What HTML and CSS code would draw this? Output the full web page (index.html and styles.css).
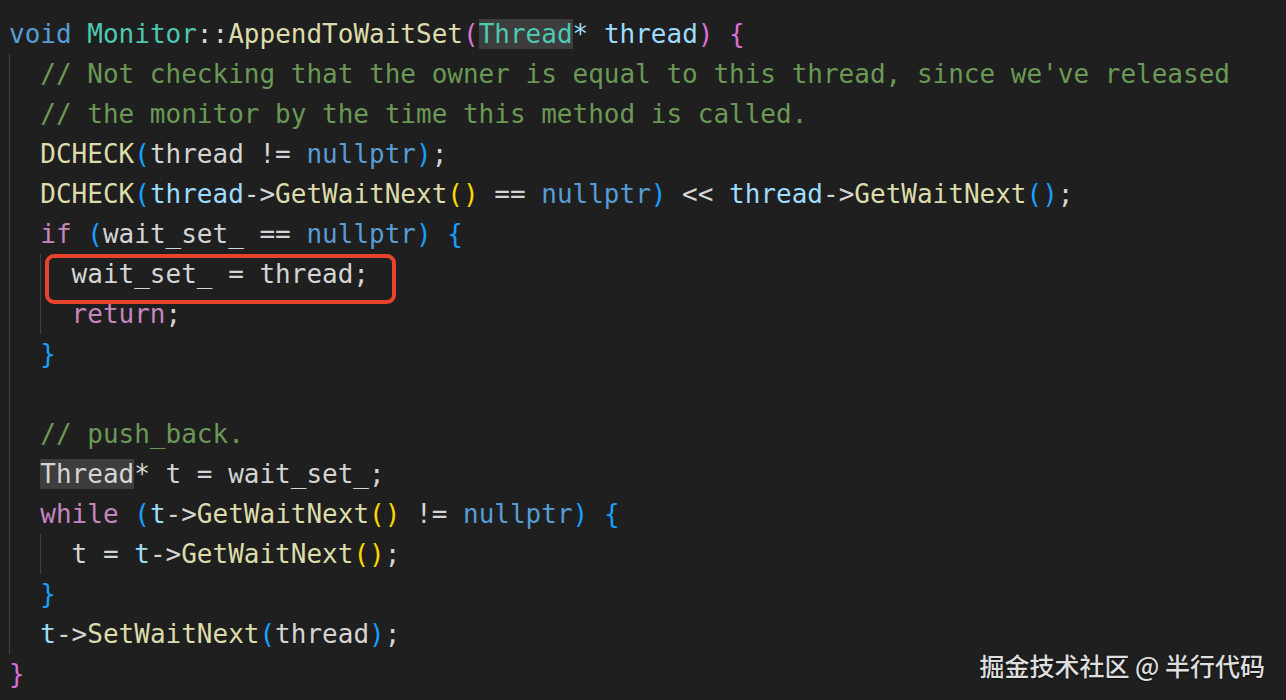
FILE: index.html
```html
<!DOCTYPE html>
<html lang="zh">
<head>
<meta charset="utf-8">
<title>Monitor::AppendToWaitSet</title>
<link rel="stylesheet" href="styles.css">
</head>
<body>
<div class="editor">
  <div class="code">
    <div class="ln"><span class="kw">void</span> <span class="ty">Monitor</span>::<span class="fn">AppendToWaitSet</span><span class="b2">(</span><span class="hl ty">Thread</span><span class="ptr">*</span> <span class="var">thread</span><span class="b2">)</span> <span class="b2">{</span></div>
    <div class="ln"><span class="ind"></span><span class="cm">// Not checking that the owner is equal to this thread, since we've released</span></div>
    <div class="ln"><span class="ind"></span><span class="cm">// the monitor by the time this method is called.</span></div>
    <div class="ln"><span class="ind"></span><span class="fn">DCHECK</span><span class="b3">(</span>thread != <span class="kw">nullptr</span><span class="b3">)</span>;</div>
    <div class="ln"><span class="ind"></span><span class="fn">DCHECK</span><span class="b3">(</span><span class="var">thread</span>-&gt;<span class="fn">GetWaitNext</span><span class="b1">()</span> == <span class="kw">nullptr</span><span class="b3">)</span> &lt;&lt; <span class="var">thread</span>-&gt;<span class="fn">GetWaitNext</span><span class="b3">()</span>;</div>
    <div class="ln"><span class="ind"></span><span class="ctl">if</span> <span class="b3">(</span>wait_set_ == <span class="kw">nullptr</span><span class="b3">)</span> <span class="b3">{</span></div>
    <div class="ln"><span class="ind"></span><span class="ind"></span>wait_set_ = thread;<span class="mark"></span></div>
    <div class="ln"><span class="ind"></span><span class="ind"></span><span class="ctl">return</span>;</div>
    <div class="ln"><span class="ind"></span><span class="b3">}</span></div>
    <div class="ln"><span class="ind"></span></div>
    <div class="ln"><span class="ind"></span><span class="cm">// push_back.</span></div>
    <div class="ln"><span class="ind"></span><span class="hl">Thread</span>* t = wait_set_;</div>
    <div class="ln"><span class="ind"></span><span class="ctl">while</span> <span class="b3">(</span><span class="var">t</span>-&gt;<span class="fn">GetWaitNext</span><span class="b1">()</span> != <span class="kw">nullptr</span><span class="b3">)</span> <span class="b3">{</span></div>
    <div class="ln"><span class="ind"></span><span class="ind"></span>t = <span class="var">t</span>-&gt;<span class="fn">GetWaitNext</span><span class="b1">()</span>;</div>
    <div class="ln"><span class="ind"></span><span class="b3">}</span></div>
    <div class="ln"><span class="ind"></span><span class="var">t</span>-&gt;<span class="fn">SetWaitNext</span><span class="b3">(</span>thread<span class="b3">)</span>;</div>
    <div class="ln"><span class="b2">}</span></div>
  </div>
  <div class="watermark">掘金技术社区 @ 半行代码</div>
</div>
</body>
</html>
```

FILE: styles.css
```css
html, body {
  margin: 0;
  padding: 0;
  background: #1f1f1f;
}

.editor {
  position: relative;
  width: 1286px;
  height: 700px;
  overflow: hidden;
  background: #1f1f1f;
}

.code {
  padding: 14px 0 0 9px;
  font-family: "DejaVu Sans Mono", "Liberation Mono", monospace;
  font-size: 26px;
  color: #d4d4d4;
}

.ln {
  height: 40px;
  line-height: 40px;
  position: relative;
  white-space: pre;
}

.ind {
  display: inline-block;
  vertical-align: top;
  width: 2ch;
  height: 40px;
  box-sizing: border-box;
  border-left: 1px solid #414141;
}

.kw { color: #569cd6; }
.ty { color: #4ec9b0; }
.fn { color: #dcdcaa; }
.var { color: #9cdcfe; }
.ptr { color: #9cdcfe; }
.cm { color: #6a9955; }
.ctl { color: #c586c0; }
.b1 { color: #ffd700; }
.b2 { color: #da70d6; }
.b3 { color: #179fff; }

.hl {
  background: #3d3d3d;
}

.mark {
  position: absolute;
  left: 36px;
  top: 0;
  width: 351px;
  height: 50px;
  box-sizing: border-box;
  border: 4px solid #e8432d;
  border-radius: 9px;
}

.watermark {
  position: absolute;
  right: 21px;
  bottom: 20px;
  font-family: "Noto Sans CJK SC", "Noto Sans", sans-serif;
  font-size: 25px;
  font-weight: 500;
  line-height: 30px;
  color: #dedede;
  text-shadow: 0 1px 2px rgba(0, 0, 0, 0.6);
  white-space: nowrap;
}
```
